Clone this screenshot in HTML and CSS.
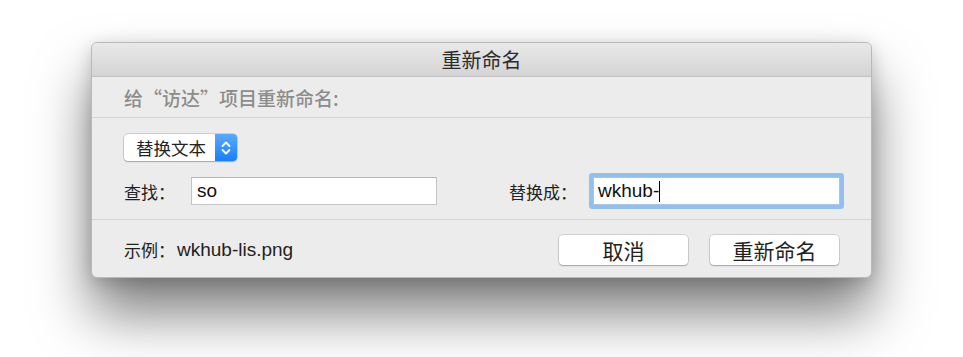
FILE: index.html
```html
<!DOCTYPE html>
<html lang="zh-CN">
<head>
<meta charset="utf-8">
<title>重新命名</title>
<link rel="stylesheet" href="styles.css">
</head>
<body>
<div class="window">
  <div class="titlebar">重新命名</div>
  <div class="header">给“访达”项目重新命名:</div>
  <div class="content">
    <div class="popup">
      <span class="popup-label">替换文本</span>
      <span class="popup-arrows">
        <svg width="12" height="18" viewBox="0 0 12 18"><path d="M2.5 7 L6 3.5 L9.5 7 M2.5 11 L6 14.5 L9.5 11" fill="none" stroke="#fff" stroke-width="1.8" stroke-linecap="round" stroke-linejoin="round"/></svg>
      </span>
    </div>
    <div class="fields">
      <span class="label">查找：</span>
      <div class="field">so</div>
      <span class="label label-2">替换成：</span>
      <div class="field focused">wkhub-<span class="caret"></span></div>
    </div>
  </div>
  <div class="footer">
    <span class="example"><span class="cjk">示例：</span>wkhub-lis.png</span>
    <div class="buttons">
      <button class="btn">取消</button>
      <button class="btn">重新命名</button>
    </div>
  </div>
</div>
</body>
</html>
```
FILE: styles.css
```css
html, body {
  margin: 0;
  padding: 0;
  background: #ffffff;
}
html { height: 100%; }
body {
  min-height: 357px;
  box-sizing: border-box;
  padding: 42px 0 0 91px;
  font-family: "Liberation Sans", "Noto Sans CJK SC", sans-serif;
  color: #222;
}
.window {
  width: 781px;
  height: 236px;
  box-sizing: border-box;
  background: #ececec;
  border: 1px solid #b9b9b9;
  border-radius: 6px;
  box-shadow: 0 36px 55px rgba(0,0,0,0.5), 0 4px 18px rgba(0,0,0,0.18);
  overflow: hidden;
  display: flex;
  flex-direction: column;
}
.titlebar {
  height: 34px;
  box-sizing: border-box;
  background: linear-gradient(#e9e9e9, #d4d4d4);
  border-bottom: 1px solid #c2c2c2;
  text-align: center;
  font-family: "Noto Sans CJK SC", sans-serif;
  font-size: 20px;
  line-height: 34px;
  color: #2c2c2c;
}
.header {
  height: 41px;
  box-sizing: border-box;
  border-bottom: 1px solid #d4d4d4;
  padding-left: 32px;
  font-family: "Noto Sans CJK SC", sans-serif;
  font-size: 19px;
  font-weight: 500;
  color: #8c8c8c;
  line-height: 42px;
}
.content {
  padding: 16px 32px 14px 32px;
  border-bottom: 1px solid #d4d4d4;
  display: flex;
  flex-direction: column;
  gap: 16px;
}
.popup {
  align-self: flex-start;
  display: flex;
  height: 27px;
  width: 113px;
  box-sizing: border-box;
  border-radius: 4px;
  background: #fff;
  box-shadow: 0 0 0 0.5px rgba(0,0,0,0.25), 0 1px 1.5px rgba(0,0,0,0.2);
  overflow: hidden;
}
.popup-label {
  flex: 1;
  font-family: "Noto Sans CJK SC", sans-serif;
  font-size: 17.5px;
  line-height: 27px;
  padding-left: 12px;
  color: #222;
}
.popup-arrows {
  width: 22px;
  background: linear-gradient(#5aa9fb, #1880fb);
  display: flex;
  align-items: center;
  justify-content: center;
}
.fields {
  display: grid;
  grid-template-columns: 67px 246px 156px 247px;
  align-items: center;
}
.label-2 { margin-left: 72px; width: 84px; }
.label {
  font-family: "Noto Sans CJK SC", sans-serif;
  font-size: 17px;
  color: #222;
}
.field {
  height: 28px;
  box-sizing: border-box;
  background: #fff;
  border: 1px solid #c3c3c3;
  border-top-color: #b3b3b3;
  font-family: "Liberation Sans", "Noto Sans CJK SC", sans-serif;
  font-size: 19px;
  line-height: 26px;
  padding-left: 5px;
  color: #111;
  display: flex;
  align-items: center;
}
.field.focused {
  border-color: #a9c5e6;
  box-shadow: 0 0 0 4px #93bfee;
  border-radius: 1px;
  padding-left: 4px;
}
.caret {
  display: inline-block;
  width: 1px;
  height: 21px;
  background: #000;
}
.footer {
  flex: 1;
  display: flex;
  align-items: center;
  justify-content: space-between;
  padding: 2px 32px 0 32px;
}
.example {
  font-family: "Liberation Sans", "Noto Sans CJK SC", sans-serif;
  font-size: 19px;
  color: #222;
  display: flex;
  align-items: center;
}
.example .cjk {
  font-family: "Noto Sans CJK SC", sans-serif;
  font-size: 17px;
  width: 53px;
}
.buttons {
  display: flex;
  gap: 22px;
}
.btn {
  width: 129px;
  height: 30px;
  margin: 0;
  padding: 0;
  background: #fff;
  border: none;
  border-radius: 4px;
  box-shadow: 0 0 0 0.5px rgba(0,0,0,0.22), 0 1px 1.5px rgba(0,0,0,0.22);
  font-family: "Noto Sans CJK SC", sans-serif;
  font-size: 21px;
  line-height: 30px;
  color: #222;
}
```
